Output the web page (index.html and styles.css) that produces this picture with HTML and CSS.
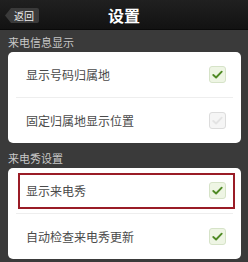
FILE: index.html
```html
<!DOCTYPE html>
<html>
<head>
<meta charset="utf-8">
<link rel="stylesheet" href="styles.css">
</head>
<body>
<div class="header">
  <div class="back">返回</div>
  <div class="title">设置</div>
</div>
<div class="section-label">来电信息显示</div>
<div class="card">
  <div class="row"><span class="text">显示号码归属地</span><span class="check on"><svg viewBox="0 0 16 16"><path d="M3.5 8.5 L6.5 11.2 L12.5 5" /></svg></span></div>
  <div class="row"><span class="text">固定归属地显示位置</span><span class="check off"><svg viewBox="0 0 16 16"><path d="M3.5 8.5 L6.5 11.2 L12.5 5" /></svg></span></div>
</div>
<div class="section-label second">来电秀设置</div>
<div class="card">
  <div class="row"><div class="highlight"><span class="text">显示来电秀</span><span class="check on"><svg viewBox="0 0 16 16"><path d="M3.5 8.5 L6.5 11.2 L12.5 5" /></svg></span></div></div>
  <div class="row"><span class="text">自动检查来电秀更新</span><span class="check on"><svg viewBox="0 0 16 16"><path d="M3.5 8.5 L6.5 11.2 L12.5 5" /></svg></span></div>
</div>
</body>
</html>
```
FILE: styles.css
```css
html, body {
  margin: 0;
  padding: 0;
}
body {
  width: 248px;
  height: 262px;
  overflow: hidden;
  background: #3a3a3a;
  font-family: "Noto Sans CJK SC", "Noto Sans", sans-serif;
}
.header {
  height: 30px;
  background: linear-gradient(#202020, #121212);
  border-bottom: 1px solid #0a0a0a;
  box-sizing: border-box;
  display: flex;
  align-items: center;
  justify-content: center;
  position: relative;
}
.back {
  position: absolute;
  left: 5px;
  top: 8px;
  height: 15px;
  padding: 0 5px 0 9px;
  background: #3a3a3a;
  color: #eee;
  font-size: 10px;
  line-height: 15px;
  border-radius: 2px;
  clip-path: polygon(0 50%, 6px 0, 100% 0, 100% 100%, 6px 100%);
}
.title {
  color: #fff;
  font-size: 16px;
  font-weight: bold;
  line-height: 30px;
}
.section-label {
  color: #c8c8c8;
  font-size: 11px;
  line-height: 14px;
  padding: 5px 0 0 8px;
  height: 22px;
  box-sizing: border-box;
}
.section-label.second {
  margin-top: 3px;
}
.card {
  margin: 0 7px 0 8px;
  background: #fff;
  border-radius: 5px;
  padding: 0 8px;
}
.row {
  height: 45px;
  display: flex;
  align-items: center;
  justify-content: space-between;
  border-bottom: 1px solid #eee;
  padding: 0 7px 0 10px;
  box-sizing: border-box;
}
.card .row:first-child {
  height: 46px;
}
.row:last-child {
  border-bottom: none;
}
.highlight {
  flex: 1;
  display: flex;
  align-items: center;
  justify-content: space-between;
  height: 36px;
  margin: 0 -9px 0 -8px;
  padding: 0 7px 0 6px;
  border: 2px solid #9a1c26;
  box-sizing: border-box;
}
.text {
  color: #4a4a4a;
  font-size: 12px;
}
.check {
  width: 17px;
  height: 17px;
  border-radius: 3px;
  box-sizing: border-box;
  display: flex;
  align-items: center;
  justify-content: center;
}
.check svg {
  width: 15px;
  height: 15px;
}
.check path {
  fill: none;
  stroke-width: 2;
  stroke-linecap: round;
  stroke-linejoin: round;
}
.check.on {
  background: #eef5e4;
  border: 1px solid #d6e3c8;
}
.check.on path {
  stroke: #4f8a25;
}
.check.off {
  background: #f5f5f5;
  border: 1px solid #dcdcdc;
}
.check.off path {
  stroke: #e3e3e3;
}
```
